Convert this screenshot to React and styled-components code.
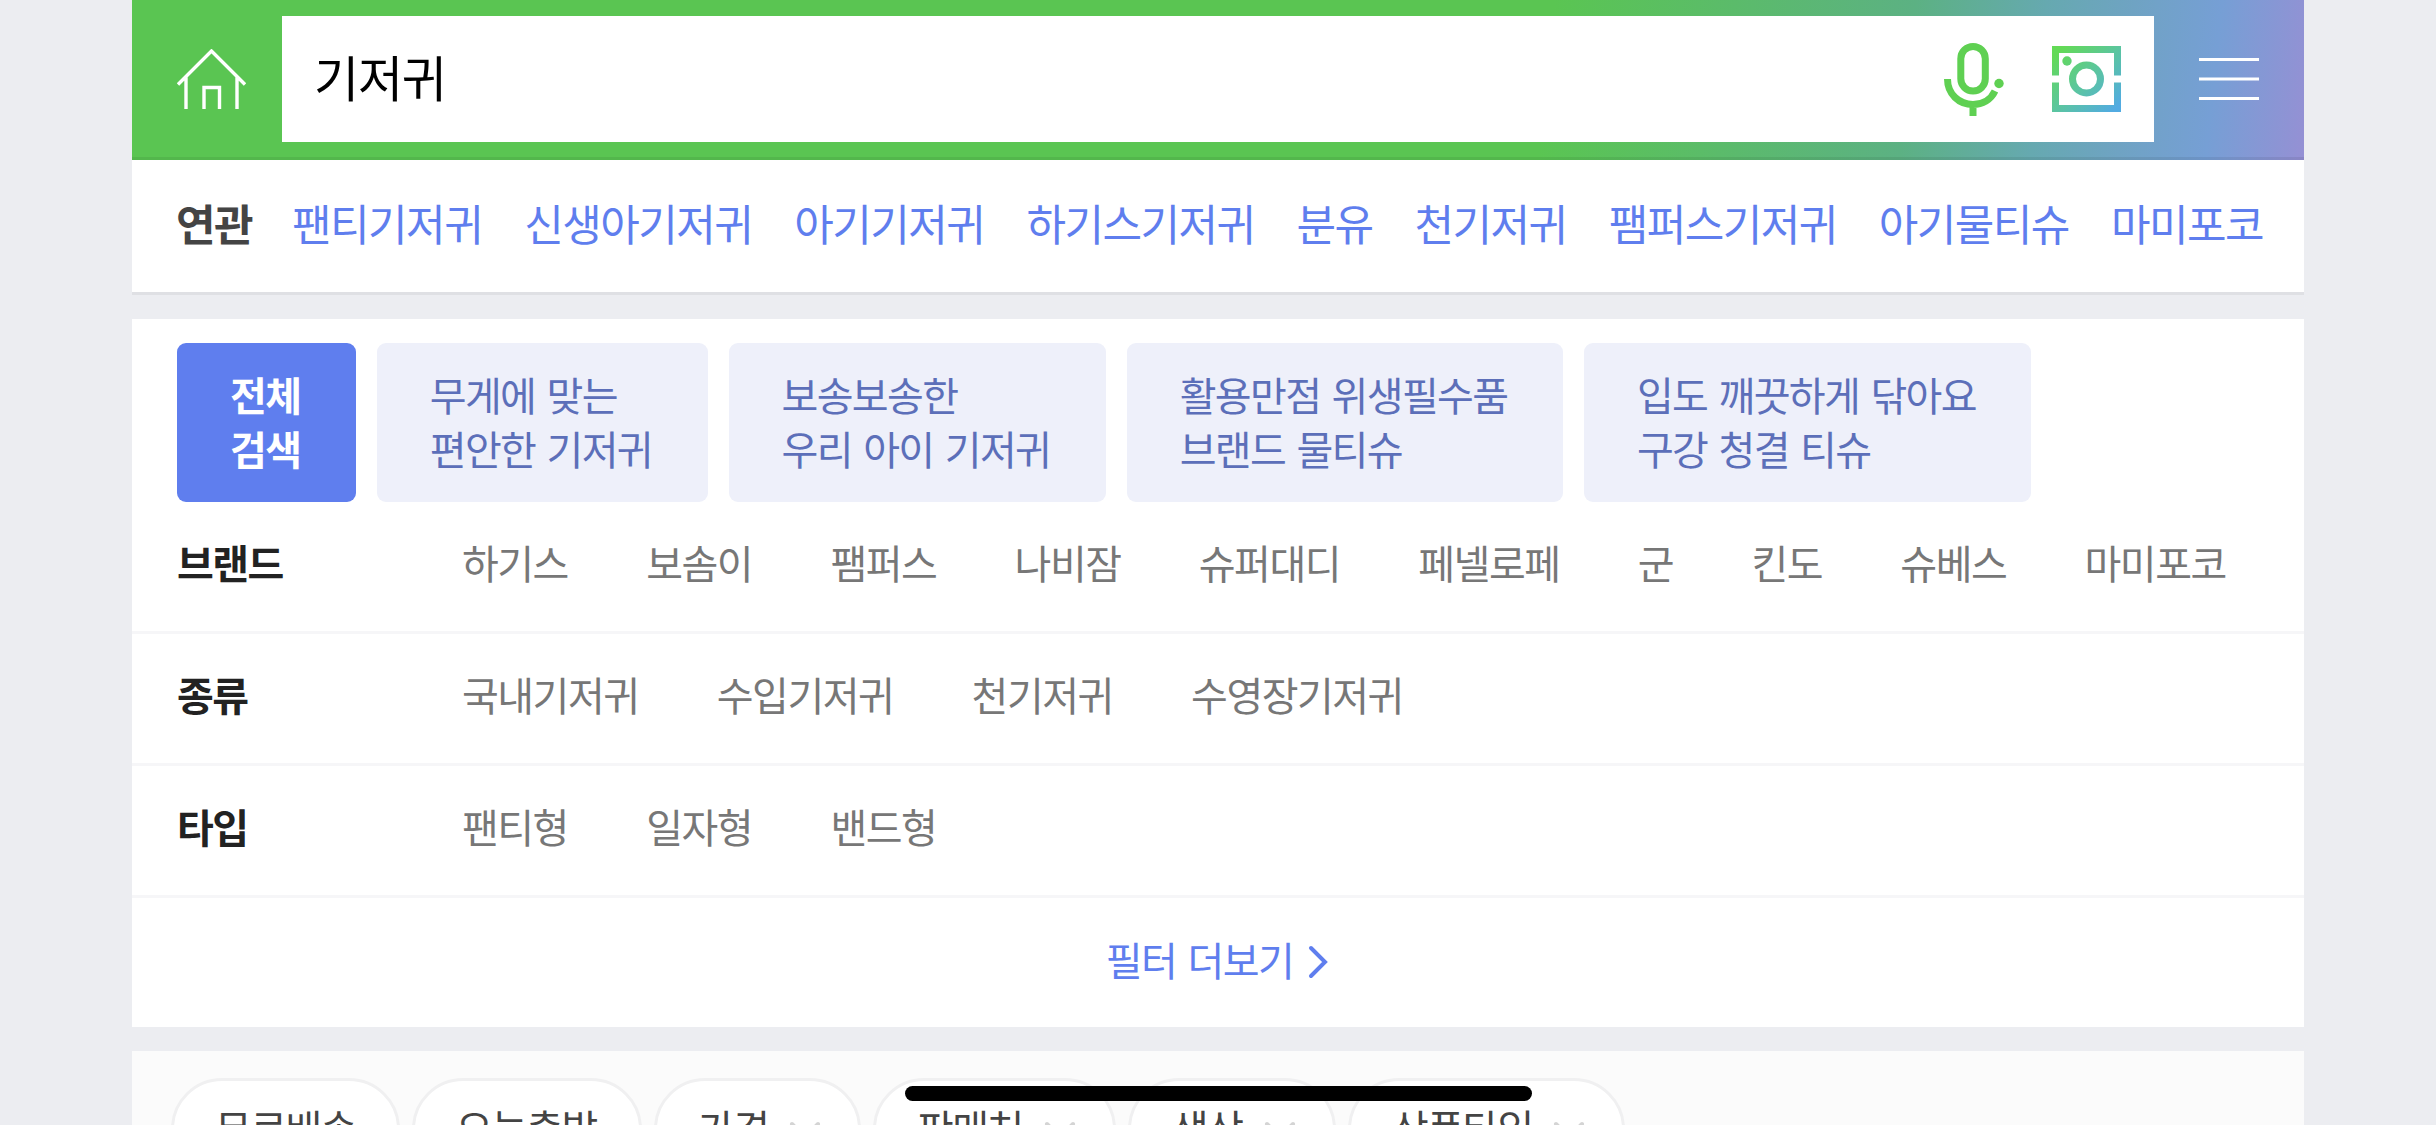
import styled, {createGlobalStyle} from 'styled-components';

const GlobalStyle = createGlobalStyle`
  * {
    box-sizing: border-box;
  }
  body {
    margin: 0;
    background: #ecedf1;
    font-family: 'Noto Sans CJK KR', sans-serif;
    overflow: hidden;
  }
`;

const Page = styled.div`
  width: 2172px;
  height: 1125px;
  margin: 0 auto;
  display: flex;
  flex-direction: column;
  overflow: hidden;
`;

const Header = styled.header`
  flex: none;
  height: 160px;
  padding: 0 45px 2px 45px;
  display: flex;
  align-items: center;
  background: linear-gradient(
    96deg,
    #5ac552 0%,
    #5ac552 65%,
    #5cb183 81.5%,
    #66a9b0 87.5%,
    #6fa3c3 91.5%,
    #769fd5 95.5%,
    #9590d4 100%
  );
  box-shadow: inset 0 -3px 0 rgba(0, 0, 0, 0.07);
`;

const SearchBox = styled.div`
  flex: 1;
  height: 126px;
  margin: 0 45px 0 36px;
  padding: 0 33px 0 32px;
  display: flex;
  align-items: center;
  background: #fff;
`;

const Query = styled.span`
  flex: 1;
  padding-bottom: 6px;
  color: #000;
  font-size: 49px;
  line-height: 72px;
  letter-spacing: -1.2px;
`;

const SearchIcons = styled.div`
  display: flex;
  align-items: center;
  gap: 48px;
`;

const Related = styled.section`
  flex: none;
  height: 135px;
  padding: 0 45px 9px 44px;
  display: flex;
  align-items: center;
  gap: 42px;
  background: #fff;
  border-bottom: 3px solid #dfe0e4;
  font-size: 43px;
  line-height: 60px;
  letter-spacing: -1.54px;
  white-space: nowrap;
`;

const RelatedTitle = styled.strong`
  color: #444;
  font-weight: 700;
  margin-right: -2px;
`;

const RelatedLink = styled.a`
  color: #5f7eee;
`;

const FilterCard = styled.section`
  flex: none;
  height: 708px;
  margin: 24px 0;
  display: flex;
  flex-direction: column;
  background: #fff;
`;

const Chips = styled.div`
  display: flex;
  gap: 21px;
  padding: 24px 45px 0;
`;

const Chip = styled.button`
  height: 159px;
  padding: 0 55.5px 3px 53px;
  border: none;
  border-radius: 9px;
  background: ${props => (props.$active ? '#5f7eee' : '#eef0fa')};
  color: ${props => (props.$active ? '#fff' : '#5c6fb9')};
  font-family: inherit;
  font-size: 40px;
  font-weight: ${props => (props.$active ? 700 : 400)};
  line-height: 54px;
  letter-spacing: -1.65px;
  word-spacing: 4px;
  text-align: left;
  white-space: pre;
`;

const FilterRow = styled.div`
  height: 132px;
  padding: 0 45px 10px;
  display: flex;
  align-items: center;
  border-bottom: 3px solid #f6f6f8;
  font-size: 40px;
  line-height: 54px;
  letter-spacing: -1.5px;
  white-space: nowrap;
`;

const FilterName = styled.strong`
  width: 285px;
  color: #222;
  font-weight: 700;
`;

const FilterValues = styled.div`
  display: flex;
  gap: 78.3px;
  color: #777;
`;

const MoreButton = styled.button`
  flex: 1;
  padding: 0 2px 8px 0;
  display: flex;
  justify-content: center;
  align-items: center;
  gap: 15px;
  border: none;
  background: none;
  color: #5f7eee;
  font-family: inherit;
  font-size: 40px;
  letter-spacing: -1.6px;
  word-spacing: 4px;

  svg {
    margin-top: 6px;
  }
`;

const OptionBar = styled.section`
  flex: 1;
  padding: 27px 39px 0;
  display: flex;
  gap: 12px;
  background: #fbfbfb;
`;

const Option = styled.button`
  flex: none;
  width: ${props => props.$width}px;
  height: 102px;
  padding: 0 37px 4px 41px;
  display: flex;
  align-items: center;
  justify-content: space-between;
  border: 3px solid #f0f0f1;
  border-radius: 51px;
  background: #fff;
  color: #444;
  font-family: inherit;
  font-size: 40px;
  letter-spacing: -1.6px;
  white-space: nowrap;

  svg {
    margin-top: 7px;
  }
`;

/* Floats over the page like the phone's own home bar */
const HomeIndicator = styled.div`
  position: fixed;
  left: 905px;
  bottom: 24px;
  width: 627px;
  height: 15px;
  border-radius: 8px;
  background: #000;
`;

const HomeIcon = () => (
  <svg width="69" height="60" viewBox="0 0 69 60" fill="none" stroke="#fff" strokeWidth="3.4">
    <path d="M1 35.500 34.500 2 68 35.500M9 28v32M60 28v32M27 60V38.500h15.500V60" />
  </svg>
);

const MicIcon = () => (
  <svg width="60" height="73" viewBox="0 0 60 73" fill="none" stroke="#5fd052" strokeWidth="7">
    <rect x="16.800" y="3.500" width="24.500" height="44.500" rx="12.250" />
    <path d="M3.500 36c0 15 11.500 25.500 25.500 25.500 9.500 0 18-5 22-13.500M29 61v12" />
    <circle cx="55" cy="40.500" r="4.700" fill="#5fd052" stroke="none" />
  </svg>
);

const CameraIcon = () => (
  <svg width="69" height="66" viewBox="0 0 69 66" fill="none" stroke="url(#camera)" strokeWidth="7">
    <defs>
      <linearGradient id="camera" gradientUnits="userSpaceOnUse" x1="8" y1="4" x2="64" y2="62">
        <stop offset="0" stopColor="#63da56" />
        <stop offset="0.5" stopColor="#5bc5a0" />
        <stop offset="1" stopColor="#52abe2" />
      </linearGradient>
    </defs>
    <path d="M3.500 29.500v-26h62v26M3.500 36.500v26h62v-26" />
    <circle cx="34.500" cy="33" r="14" />
    <circle cx="15" cy="15" r="4.700" fill="url(#camera)" stroke="none" />
  </svg>
);

const MenuIcon = () => (
  <svg width="60" height="42" viewBox="0 0 60 42" fill="#fff">
    <path d="M0 0h60v3H0zM0 19.500h60v3H0zM0 39h60v3H0z" />
  </svg>
);

const RightArrow = () => (
  <svg width="20" height="34" viewBox="0 0 20 34" fill="none" stroke="#5f7eee" strokeWidth="4" strokeLinecap="round">
    <path d="m3 3 14 14L3 31" />
  </svg>
);

const DownArrow = () => (
  <svg width="32" height="19" viewBox="0 0 32 19" fill="none" stroke="#d4d4d4" strokeWidth="4" strokeLinecap="round">
    <path d="m3 3 13 13L29 3" />
  </svg>
);

const related = [
  '팬티기저귀',
  '신생아기저귀',
  '아기기저귀',
  '하기스기저귀',
  '분유',
  '천기저귀',
  '팸퍼스기저귀',
  '아기물티슈',
  '마미포코',
];

const chips = [
  '전체\n검색',
  '무게에 맞는\n편안한 기저귀',
  '보송보송한\n우리 아이 기저귀',
  '활용만점 위생필수품\n브랜드 물티슈',
  '입도 깨끗하게 닦아요\n구강 청결 티슈',
];

const filters = [
  {
    name: '브랜드',
    values: ['하기스', '보솜이', '팸퍼스', '나비잠', '슈퍼대디', '페넬로페', '군', '킨도', '슈베스', '마미포코'],
  },
  {name: '종류', values: ['국내기저귀', '수입기저귀', '천기저귀', '수영장기저귀']},
  {name: '타입', values: ['팬티형', '일자형', '밴드형']},
];

const options = [
  {name: '무료배송', width: 229},
  {name: '오늘출발', width: 230},
  {name: '가격', width: 207, arrow: true},
  {name: '판매처', width: 243, arrow: true},
  {name: '색상', width: 208, arrow: true},
  {name: '상품타입', width: 277, arrow: true},
];

const App = () => (
  <>
    <GlobalStyle />
    <Page>
      <Header>
        <HomeIcon />
        <SearchBox>
          <Query>기저귀</Query>
          <SearchIcons>
            <MicIcon />
            <CameraIcon />
          </SearchIcons>
        </SearchBox>
        <MenuIcon />
      </Header>

      <Related>
        <RelatedTitle>연관</RelatedTitle>
        {related.map(word => (
          <RelatedLink key={word}>{word}</RelatedLink>
        ))}
      </Related>

      <FilterCard>
        <Chips>
          {chips.map((text, i) => (
            <Chip key={text} $active={i === 0}>
              {text}
            </Chip>
          ))}
        </Chips>
        {filters.map(({name, values}) => (
          <FilterRow key={name}>
            <FilterName>{name}</FilterName>
            <FilterValues>
              {values.map(value => (
                <span key={value}>{value}</span>
              ))}
            </FilterValues>
          </FilterRow>
        ))}
        <MoreButton>
          필터 더보기
          <RightArrow />
        </MoreButton>
      </FilterCard>

      <OptionBar>
        {options.map(({name, width, arrow}) => (
          <Option key={name} $width={width}>
            {name}
            {arrow && <DownArrow />}
          </Option>
        ))}
      </OptionBar>
    </Page>
    <HomeIndicator />
  </>
);

export default App;
